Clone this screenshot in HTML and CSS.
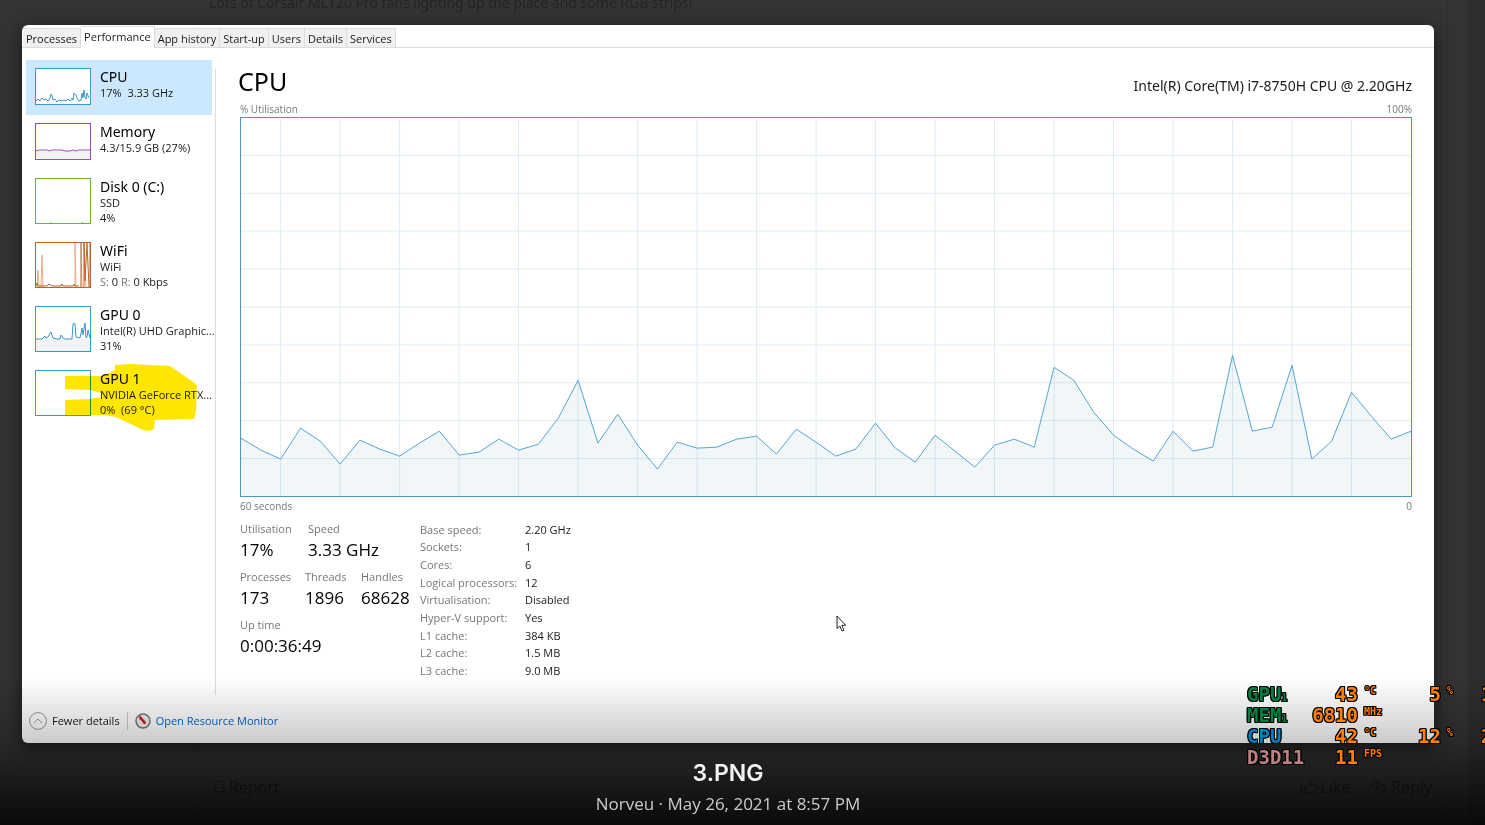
FILE: index.html
```html
<!DOCTYPE html>
<html lang="en">
<head>
    <meta charset="UTF-8">
    <meta name="viewport" content="width=device-width, initial-scale=1.0">
    <title>3.PNG</title>
    <link rel="stylesheet" href="styles.css">
</head>
<body>
    <!-- Forum thread behind the lightbox -->
    <div class="thread">
        <div class="post">
            <p class="post-text">Lots of Corsair ML120 Pro fans lighting up the place and some RGB strips!</p>
            <div class="post-actions">
                <a href="#" class="report">
                    <svg width="14" height="16" viewBox="0 0 14 16"><path d="M7 1v1M1 12.500c2-2 1.500-4 2-6.500C3.500 3.500 5 2.300 7 2.300S10.500 3.500 11 6c.5 2.500 0 4.500 2 6.500zM5.500 14.500h3"/></svg>
                    Report
                </a>
                <a href="#">
                    <svg width="18" height="16" viewBox="0 0 18 16"><path d="M1 7h4v8H1zM5 8l3-3V2c0-1.500 3-1.500 3 1 0 1.500-1 3-1 3h5c2 0 2 2.300 1 2.500 1 .5.700 2-.4 2.300.7.700.2 1.800-.8 2 .4 1.200-.4 1.700-1.300 1.700H8c-1.500 0-2-.8-3-1"/></svg>
                    Like
                </a>
                <a href="#">
                    <svg width="18" height="16" viewBox="0 0 18 16"><path d="M7 1L1 6l6 5V8c5 0 7 1 6 6.500 3-3 5-10-6-10z"/></svg>
                    Reply
                </a>
            </div>
        </div>
        <div class="scrollbar"></div>
    </div>

    <!-- Lightbox -->
    <div class="lightbox">
        <div class="window">
            <nav class="tabs">
                <button class="tab">Processes</button>
                <button class="tab active">Performance</button>
                <button class="tab">App history</button>
                <button class="tab">Start-up</button>
                <button class="tab">Users</button>
                <button class="tab">Details</button>
                <button class="tab">Services</button>
            </nav>

            <div class="content">
                <div class="sidebar">
                    <button class="device selected">
                        <svg class="thumb short blue" viewBox="0 0 56 37"><rect x=".5" y=".5" width="55" height="36"/><path class="line" d="M1 33l2-2 2 2 2-3 2 2 2-1 2 2 2-3 1-4 1 1 1 5 2-1 2 3 2-2 3 1 2-1 2 1 2-2 2 2 2-3 1 2 1-7 2 2 1 3 2 3 2-1 1-7 1 5 1-8 1 7 1 2 1-6 2 5"/></svg>
                        <span class="info"><span class="name">CPU</span><span>17%&nbsp; 3.33 GHz</span></span>
                    </button>
                    <button class="device">
                        <svg class="thumb short purple" viewBox="0 0 56 37"><rect x=".5" y=".5" width="55" height="36"/><path class="area" d="M1 28h54v7H1z"/><path class="line" d="M1 28l3-1h8l2 1 3-1h10l3 1h5l3-1 3 1 2-1h12"/></svg>
                        <span class="info"><span class="name">Memory</span><span>4.3/15.9 GB (27%)</span></span>
                    </button>
                    <button class="device">
                        <svg class="thumb green" viewBox="0 0 56 46"><rect x=".5" y=".5" width="55" height="45"/><path class="line" d="M1 45.500h14l1-1 1 1h29l1-1 2 1h6"/></svg>
                        <span class="info"><span class="name">Disk 0 (C:)</span><span>SSD</span><span>4%</span></span>
                    </button>
                    <button class="device">
                        <svg class="thumb orange" viewBox="0 0 56 46"><rect x=".5" y=".5" width="55" height="45"/><path class="spike" d="M2 45l1-17 1 17M6 45L7 13l1 32M40 45V1l1 44M47 45L46 1M49 1l2 44"/><path class="line" d="M1 44l1-3 1 3h9l2-2 3 2h9l1-2 1 2h10l1-2 1 2h4M46 45V1M49 45V1l1 38 2-38 2 44M55 1v44"/></svg>
                        <span class="info"><span class="name">WiFi</span><span>WiFi</span><span><span class="dim">S:</span> 0 <span class="dim">R:</span> 0 Kbps</span></span>
                    </button>
                    <button class="device">
                        <svg class="thumb blue" viewBox="0 0 56 46"><rect x=".5" y=".5" width="55" height="45"/><path class="area" d="M1 33h54v12H1z"/><path class="line" d="M1 33h6l3-3 1 2 2-1 3-5 2 6 4 1h3l1-4 2 3 2 1h7l1-15 1-1 1 1 1 13 4 1 2-10 1 7 2-12 1 15 1-1 1-7 2 8"/></svg>
                        <span class="info"><span class="name">GPU 0</span><span>Intel(R) UHD Graphic...</span><span>31%</span></span>
                    </button>
                    <button class="device">
                        <svg class="thumb blue" viewBox="0 0 56 46"><rect x=".5" y=".5" width="55" height="45"/></svg>
                        <span class="info"><span class="name">GPU 1</span><span>NVIDIA GeForce RTX...</span><span>0%&nbsp; (69 °C)</span></span>
                        <svg class="marker" width="176" height="72" viewBox="0 0 176 72"><path d="M39 14h38l12-6V3l17-1 38 2 9 6 17 12 1 4-1 23-2 8-39 1-1 9-5 2-6-1-27-13-14-2H39V38l24-1 13-2v-4l-13-3-24-1z"/></svg>
                    </button>
                </div>

                <main class="panel">
                    <div class="panel-head">
                        <h1>CPU</h1>
                        <span class="model">Intel(R) Core(TM) i7-8750H CPU @ 2.20GHz</span>
                    </div>
                    <div class="axis"><span>% Utilisation</span><span>100%</span></div>
                    <svg class="chart" viewBox="0 -1 590 379" preserveAspectRatio="none">
                        <path class="grid" d="M20 0v379M50 0v379M80 0v379M110 0v379M140 0v379M170 0v379M200 0v379M230 0v379M260 0v379M290 0v379M320 0v379M350 0v379M380 0v379M410 0v379M440 0v379M470 0v379M500 0v379M530 0v379M560 0v379M0 36.500h590M0 74.500h590M0 112.500h590M0 150.500h590M0 188.500h590M0 226.500h590M0 264.500h590M0 302.500h590M0 340.500h590"/>
                        <path class="usage" d="M-5 379L0 320L10 332L20 341L30 310L40 323L50 346L60 322L70 331L80 338L90 325L100 313L110 337L120 334L130 321L140 332L150 326L160 300L170 262L180 325L190 296L200 327L210 351L220 324L230 330L240 329L250 321L260 318L270 336L280 311L290 324L300 338L310 331L320 305L330 330L340 344L350 317L360 333L370 349L380 327L390 321L400 329L410 249L420 262L430 294L440 317L450 331L460 343L470 313L480 333L490 329L500 237L510 313L520 309L530 247L540 341L550 323L560 274L570 298L580 321L590 313L595 379z"/>
                    </svg>
                    <div class="axis bottom"><span>60 seconds</span><span>0</span></div>

                    <div class="stats">
                        <div class="counters">
                            <dl class="row wide">
                                <div><dt>Utilisation</dt><dd>17%</dd></div>
                                <div><dt>Speed</dt><dd>3.33 GHz</dd></div>
                            </dl>
                            <dl class="row">
                                <div><dt>Processes</dt><dd>173</dd></div>
                                <div><dt>Threads</dt><dd>1896</dd></div>
                                <div><dt>Handles</dt><dd>68628</dd></div>
                            </dl>
                            <dl class="row">
                                <div><dt>Up time</dt><dd>0:00:36:49</dd></div>
                            </dl>
                        </div>
                        <table class="specs">
                            <tr><th>Base speed:</th><td>2.20 GHz</td></tr>
                            <tr><th>Sockets:</th><td>1</td></tr>
                            <tr><th>Cores:</th><td>6</td></tr>
                            <tr><th>Logical processors:</th><td>12</td></tr>
                            <tr><th>Virtualisation:</th><td>Disabled</td></tr>
                            <tr><th>Hyper-V support:</th><td>Yes</td></tr>
                            <tr><th>L1 cache:</th><td>384 KB</td></tr>
                            <tr><th>L2 cache:</th><td>1.5 MB</td></tr>
                            <tr><th>L3 cache:</th><td>9.0 MB</td></tr>
                        </table>
                    </div>
                </main>
            </div>

            <footer class="footer">
                <button class="fewer">
                    <svg width="18" height="18" viewBox="0 0 18 18"><circle cx="9" cy="9" r="8.400"/><path d="M5 11l4-4 4 4"/></svg>
                    Fewer details
                </button>
                <a href="#" class="monitor">
                    <svg width="16" height="16" viewBox="0 0 16 16"><circle cx="8" cy="8" r="7" fill="#f3f0ec" stroke="#777" stroke-width="1.500"/><path d="M4 9a4.500 4.500 0 0 1 8 0" transform="rotate(35 8 8)" fill="none" stroke="#b9a98f" stroke-width="1.300"/><path d="M4.500 3.500l5.500 7" stroke="#d01020" stroke-width="2.200"/></svg>
                    Open Resource Monitor
                </a>
            </footer>
        </div>

        <div class="caption">
            <h2>3.PNG</h2>
            <p>Norveu · May 26, 2021 at 8:57 PM</p>
        </div>
    </div>

    <div class="shade"></div>

    <svg class="cursor" width="11" height="18" viewBox="0 0 11 18"><path d="M1 1v12.500l2.800-2.500 2.200 5 2-.9-2.200-4.800h3.900z"/></svg>

    <!-- Hardware monitor overlay -->
    <table class="osd">
        <tr class="gpu"><th>GPU<small>1</small></th><td>43</td><td class="unit">°C</td><td>5</td><td class="unit">%</td><td class="cut">1</td></tr>
        <tr class="gpu"><th>MEM<small>1</small></th><td>6810</td><td class="unit">MHz</td><td></td><td></td><td></td></tr>
        <tr class="cpu"><th>CPU</th><td>42</td><td class="unit">°C</td><td>12</td><td class="unit">%</td><td class="cut">2</td></tr>
        <tr class="api"><th>D3D11</th><td>11</td><td class="unit">FPS</td><td></td><td></td><td></td></tr>
    </table>
</body>
</html>
```
FILE: styles.css
```css
/* General Styling */
* {
    box-sizing: border-box;
}

body {
    margin: 0;
    min-height: 100vh;
    background: #343434;
    font-family: "Open Sans", "Noto Sans", sans-serif;
    font-size: 11px;
    color: #1a1a1a;
    overflow: hidden;
}

button {
    font: inherit;
    color: inherit;
    border: none;
    background: none;
    padding: 0;
    cursor: pointer;
}

h1, h2, p, dl, dd {
    margin: 0;
    font-weight: normal;
}

/* Forum thread */
.thread {
    position: fixed;
    inset: 0;
    display: flex;
    font-size: 16px;
    color: #242424;
}

.post {
    flex: 1;
    display: flex;
    flex-direction: column;
    justify-content: space-between;
    margin: -8px 20px 0 193px;
    padding: 0 15px 27px;
    border: 1px solid #303030;
    border-width: 0 1px;
}

.post-text {
    font-family: "Noto Sans", sans-serif;
    font-size: 14px;
    line-height: 22px;
}

.post-actions {
    display: flex;
    gap: 20px;
    padding-left: 3px;
    line-height: 22px;
}

.post-actions a {
    display: flex;
    align-items: center;
    gap: 3px;
    color: #1c1c1c;
    text-decoration: none;
}

.post-actions svg {
    fill: none;
    stroke: currentColor;
}

.report {
    margin-right: auto;
}

.scrollbar {
    width: 17px;
    background: #2e2e2e;
}

/* Lightbox */
.lightbox {
    position: relative;
    padding: 25px 51px 0 22px;
}

.window {
    background: white;
    border-radius: 6px;
    box-shadow: 0 4px 20px rgba(0, 0, 0, 0.6);
}

/* Tabs */
.tabs {
    display: flex;
    align-items: flex-end;
    height: 23px;
    padding-left: 1px;
    border-bottom: 1px solid #dcdcdc;
}

.tab {
    height: 19px;
    padding: 0 3px;
    background: #f0f0f0;
    border: 1px solid #dcdcdc;
    border-width: 1px 1px 0 0;
}

.tab.active {
    height: 22px;
    margin-bottom: -1px;
    padding-bottom: 2px;
    background: white;
}

/* Sidebar */
.content {
    display: flex;
}

.sidebar {
    width: 190px;
    padding: 12px 0 0 4px;
}

.device {
    position: relative;
    display: flex;
    gap: 9px;
    width: 100%;
    height: 64px;
    padding: 8px 0 0 9px;
    text-align: left;
    white-space: nowrap;
}

.device:has(.short) {
    height: 55px;
}

.device.selected {
    background: #cce8ff;
}

.info {
    display: flex;
    flex-direction: column;
    line-height: 15px;
}

.name {
    font-family: "Noto Sans", sans-serif;
    font-size: 14px;
    line-height: 17px;
    color: black;
}

.dim {
    color: #777;
}

.thumb {
    flex: none;
    width: 56px;
    height: 46px;
}

.thumb.short {
    height: 37px;
}

.thumb rect {
    fill: white;
    stroke: currentColor;
}

.thumb .line {
    fill: none;
    stroke: currentColor;
}

.thumb .area {
    fill: #f0f4f9;
}

.blue {
    color: #3c96c8;
}

.purple {
    color: #a04ab8;
}

.purple .area {
    fill: #f3f1f4;
}

.green {
    color: #6cb33a;
}

.orange {
    color: #b9652a;
}

.spike {
    fill: none;
    stroke: #efa98a;
}

.marker {
    position: absolute;
    top: 0;
    left: 0;
    fill: #ffe600;
    mix-blend-mode: multiply;
}

/* Panel */
.panel {
    flex: 1;
    margin-top: 21px;
    padding: 0 22px 0 24px;
    border-left: 1px solid #dcdcdc;
    min-height: 626px;
    margin-left: 3px;
}

.panel-head {
    display: flex;
    justify-content: space-between;
    align-items: baseline;
    height: 32px;
}

.panel-head h1 {
    margin-left: -2px;
    font-family: "Noto Sans", sans-serif;
    font-size: 25px;
    line-height: 25px;
    color: black;
}

.model {
    font-family: "Noto Sans", sans-serif;
    font-size: 14px;
}

.axis {
    display: flex;
    justify-content: space-between;
    font-size: 10px;
    line-height: 16px;
    color: #777;
}

.axis.bottom {
    padding-top: 1px;
}

.chart {
    display: block;
    width: 100%;
    height: 380px;
    border: 1px solid #4a9ac9;
}

.chart path {
    vector-effect: non-scaling-stroke;
}

.grid {
    fill: none;
    stroke: #deecf6;
}

.usage {
    fill: rgba(17, 100, 160, 0.06);
    stroke: #55a5d2;
}

/* Stats */
.stats {
    display: flex;
    padding-top: 7px;
}

.counters {
    width: 180px;
}

.row {
    display: grid;
    grid-template-columns: 65px 56px auto;
    height: 48px;
}

.row.wide {
    grid-template-columns: 68px auto;
}

dt {
    line-height: 16px;
    color: #777;
}

dd {
    font-size: 17px;
    line-height: 26px;
    color: black;
}

.specs {
    height: 159px;
    border-collapse: collapse;
    line-height: 16px;
}

.specs th {
    width: 105px;
    padding: 0;
    font-weight: normal;
    text-align: left;
    color: #777;
}

.specs td {
    padding: 0;
}

/* Footer */
.footer {
    display: flex;
    align-items: center;
    height: 48px;
    padding: 4px 7px 0;
}

.fewer, .monitor {
    display: flex;
    align-items: center;
    gap: 5px;
    line-height: 14px;
}

.fewer {
    padding-right: 7px;
    border-right: 1px solid #ccc;
}

.fewer svg {
    fill: none;
    stroke: #999;
}

.monitor {
    padding-left: 7px;
    color: #0066cc;
    text-decoration: none;
}

/* Caption */
.caption {
    position: relative;
    z-index: 2;
    padding-top: 16px;
    text-align: center;
    color: #ccc;
}

.caption h2 {
    font-family: Inter, sans-serif;
    font-size: 23px;
    font-weight: 600;
    line-height: 28px;
    color: #f2f2f2;
}

.caption p {
    font-size: 17px;
    line-height: 34px;
}

.shade {
    position: fixed;
    inset: auto 0 0;
    height: 147px;
    background: linear-gradient(transparent, rgba(0, 0, 0, 0.2) 43%, rgba(0, 0, 0, 0.35) 57%, rgba(0, 0, 0, 0.8));
    z-index: 1;
}

.cursor {
    position: fixed;
    top: 615px;
    left: 836px;
    fill: white;
    stroke: #222;
}

/* Hardware monitor overlay */
.osd {
    position: fixed;
    top: 684px;
    right: 0;
    width: 238px;
    table-layout: fixed;
    border-collapse: collapse;
    font-family: "DejaVu Sans Mono", monospace;
    font-size: 19px;
    font-weight: bold;
    line-height: 21px;
    text-align: right;
    color: #ff8000;
    text-shadow: 1px 0 black, -1px 0 black, 0 1px black, 0 -1px black, 1px 1px black, -1px -1px black, 1px -1px black, -1px 1px black;
    z-index: 3;
}

.osd th, .osd td {
    width: 51px;
    height: 21px;
    padding: 0;
    vertical-align: top;
}

.osd th {
    width: 60px;
    text-align: left;
}

.osd small {
    font-size: 10px;
    line-height: 10px;
}

.osd .unit {
    width: 54px;
    padding: 2px 0 0 6px;
    font-size: 10px;
    line-height: 10px;
    text-align: left;
}

.osd td:nth-child(4) {
    width: 29px;
}

.osd td:nth-child(5) {
    width: 40px;
}

.osd td:nth-child(6) {
    width: 4px;
    text-align: left;
}

.gpu th {
    color: #008040;
}

.cpu th {
    color: #0080c0;
}

.api th {
    color: #c08080;
}
```
